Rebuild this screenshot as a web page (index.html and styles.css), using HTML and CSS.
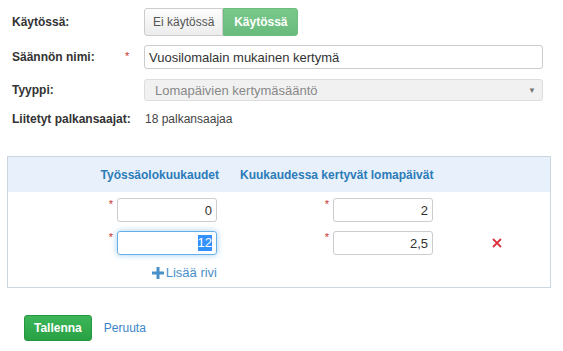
FILE: index.html
```html
<!DOCTYPE html>
<html lang="fi">
<head>
  <meta charset="UTF-8" />
  <title>Lomapäivien kertymäsääntö</title>
  <link rel="stylesheet" href="styles.css">
</head>
<body>
  <div class="rule-form">
    <div class="form-row row-status">
      <label class="form-label">Käytössä:</label>
      <div class="toggle">
        <button class="toggle-btn">Ei käytössä</button>
        <button class="toggle-btn active">Käytössä</button>
      </div>
    </div>

    <div class="form-row row-name">
      <label class="form-label">Säännön nimi: <span class="req">*</span></label>
      <input class="text-input" type="text" value="Vuosilomalain mukainen kertymä" />
    </div>

    <div class="form-row row-type">
      <label class="form-label">Tyyppi:</label>
      <div class="select disabled">
        <span>Lomapäivien kertymäsääntö</span>
        <span class="caret">▼</span>
      </div>
    </div>

    <div class="form-row row-linked">
      <label class="form-label">Liitetyt palkansaajat:</label>
      <span class="value">18 palkansaajaa</span>
    </div>

    <!-- Accrual table -->
    <div class="accrual-panel">
      <div class="accrual-head">
        <div class="col-1">Työssäolokuukaudet</div>
        <div class="col-2">Kuukaudessa kertyvät lomapäivät</div>
        <div></div>
      </div>
      <div class="accrual-body">
        <div class="cell-1"><span class="req">*</span><input class="num-input" type="text" value="0" /></div>
        <div class="cell-2"><span class="req">*</span><input class="num-input" type="text" value="2" /></div>
        <div class="cell-3"></div>

        <div class="cell-1"><span class="req">*</span><span class="num-input focused"><span class="sel">12</span></span></div>
        <div class="cell-2"><span class="req">*</span><input class="num-input" type="text" value="2,5" /></div>
        <div class="cell-3">
          <svg class="remove" viewBox="0 0 10 10" width="10" height="10"><path d="M1 1L9 9M9 1L1 9" stroke="#d9333f" stroke-width="1.8"/></svg>
        </div>

        <div class="cell-1 add-cell">
          <a class="add-row" href="#">
            <svg viewBox="0 0 12 12" width="12" height="12"><path d="M4.5 0h3v4.5H12v3H7.5V12h-3V7.5H0v-3h4.5z" fill="#4a90c8"/></svg>Lisää rivi
          </a>
        </div>
      </div>
    </div>

    <div class="actions">
      <button class="btn-save">Tallenna</button>
      <a class="cancel" href="#">Peruuta</a>
    </div>
  </div>
</body>
</html>
```

FILE: styles.css
```css
body, html {
  margin: 0;
  background: #fff;
  font-family: 'Liberation Sans', Arial, sans-serif;
  font-size: 12px;
  color: #333;
}

.rule-form {
  padding: 8px 0 0 0;
}

.form-row {
  display: flex;
  align-items: center;
  padding-left: 12px;
}

.form-label {
  width: 132px;
  flex: none;
  font-weight: bold;
  color: #333;
  position: relative;
}

.form-label .req {
  position: absolute;
  left: 113px;
  top: 0;
}

.req {
  color: #c9302c;
  font-weight: normal;
  font-size: 11px;
}

.row-status {
  height: 28px;
}

.toggle {
  display: flex;
}

.toggle-btn {
  height: 28px;
  padding: 0 8px;
  font-family: inherit;
  font-size: 12px;
  border: 1px solid #ccc;
  background: linear-gradient(#fdfdfd, #ececec);
  color: #555;
  border-radius: 3px 0 0 3px;
  margin: 0;
}

.toggle-btn.active {
  width: 75px;
  background: linear-gradient(#78c98a, #69bb7d);
  border-color: #6cbd80;
  color: #fff;
  font-weight: bold;
  border-radius: 0 3px 3px 0;
}

.row-name {
  margin-top: 9px;
}

.text-input {
  width: 399px;
  height: 24px;
  box-sizing: border-box;
  border: 1px solid #ccc;
  border-radius: 3px;
  padding: 0 4px;
  font-family: inherit;
  font-size: 13px;
  color: #333;
  margin: 0;
}

.row-type {
  margin-top: 10px;
}

.select {
  width: 399px;
  height: 22px;
  box-sizing: border-box;
  border: 1px solid #ddd;
  border-radius: 3px;
  background: #f1f1f1;
  color: #888;
  font-size: 13px;
  display: flex;
  align-items: center;
  justify-content: space-between;
  padding: 0 6px 0 10px;
}

.caret {
  font-size: 8px;
  color: #777;
}

.row-linked {
  margin-top: 9px;
  height: 18px;
}

.row-linked .value {
  padding-left: 1px;
  color: #444;
}

.accrual-panel {
  margin: 28px 12px 0 7px;
  border: 1px solid #cad7e3;
}

.accrual-head,
.accrual-body {
  display: grid;
  grid-template-columns: 220px 217px 1fr;
}

.accrual-head {
  background: #e8f0fb;
  height: 35px;
  align-items: center;
  font-weight: bold;
  color: #2b7cb8;
}

.accrual-head .col-1 {
  text-align: right;
  padding-right: 9px;
}

.accrual-head .col-2 {
  padding-left: 12px;
}

.accrual-body {
  padding-top: 6px;
  row-gap: 9px;
  align-items: center;
}

.cell-1,
.cell-2 {
  display: flex;
  justify-content: flex-end;
  align-items: flex-start;
  gap: 4px;
  padding-right: 11px;
}

.cell-2 {
  padding-right: 12px;
}

.num-input {
  width: 100px;
  height: 24px;
  box-sizing: border-box;
  border: 1px solid #ccc;
  border-radius: 3px;
  padding: 0 4px;
  text-align: right;
  font-family: inherit;
  font-size: 13px;
  color: #333;
  margin: 0;
}

.num-input.focused {
  display: flex;
  align-items: center;
  justify-content: flex-end;
  border-color: #66afe9;
  box-shadow: 0 0 6px rgba(102, 175, 233, 0.6);
}

.sel {
  background: #3390ff;
  color: #fff;
  line-height: 16px;
}

.cell-3 {
  display: flex;
  padding-left: 47px;
}

.add-cell {
  margin-top: 1px;
  padding-bottom: 7px;
}

.add-row {
  color: #4a90c8;
  text-decoration: none;
  display: flex;
  align-items: center;
  gap: 2px;
  font-size: 13px;
}

.actions {
  display: flex;
  align-items: center;
  gap: 12px;
  margin: 27px 0 0 24px;
}

.btn-save {
  height: 26px;
  padding: 0 9px;
  border: 1px solid #26963f;
  border-radius: 3px;
  background: linear-gradient(#3db65a, #27a144);
  color: #fff;
  font-family: inherit;
  font-size: 12px;
  font-weight: bold;
}

.cancel {
  color: #3a85c6;
  text-decoration: none;
}
```
